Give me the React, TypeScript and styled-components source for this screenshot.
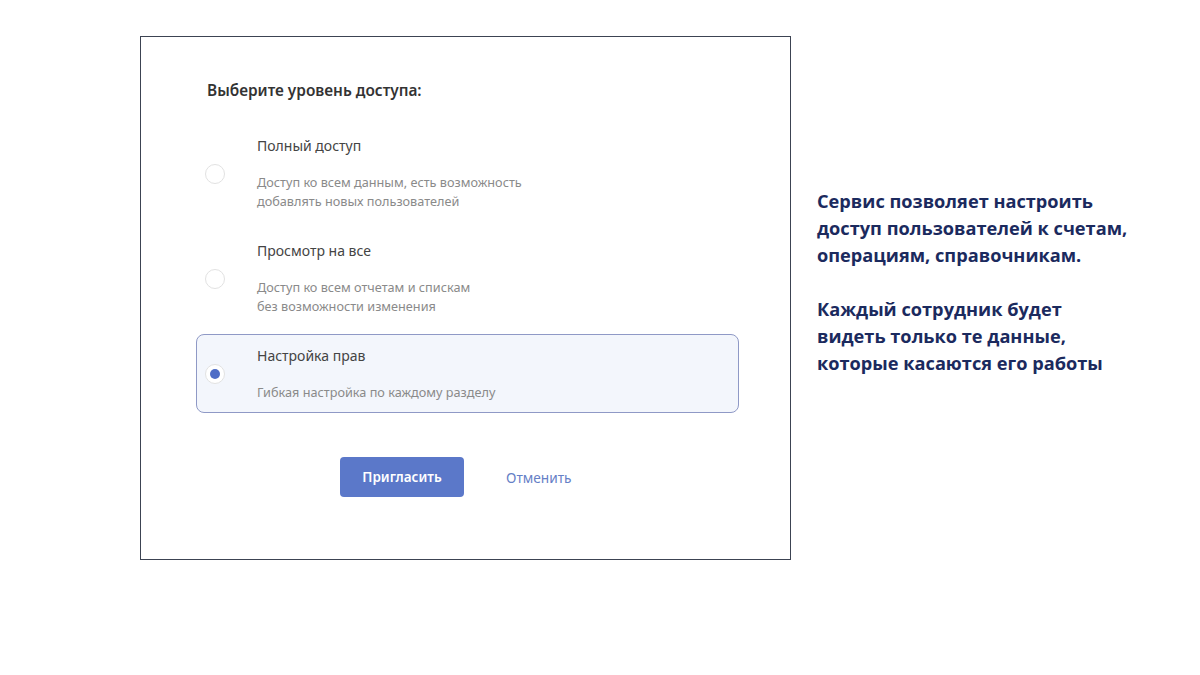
import React, { useState } from "react";
import styled, { createGlobalStyle } from "styled-components";

const GlobalStyle = createGlobalStyle`
  html, body {
    margin: 0;
    padding: 0;
    background: #ffffff;
  }
  body {
    font-family: "Noto Sans", "Open Sans", sans-serif;
  }
`;

const options = [
  {
    id: "full",
    title: "Полный доступ",
    description: ["Доступ ко всем данным, есть возможность", "добавлять новых пользователей"],
  },
  {
    id: "view",
    title: "Просмотр на все",
    description: ["Доступ ко всем отчетам и спискам", "без возможности изменения"],
  },
  {
    id: "custom",
    title: "Настройка прав",
    description: ["Гибкая настройка по каждому разделу"],
  },
];

const Page = styled.div`
  display: flex;
  align-items: flex-start;
  padding: 36px 0 0 140px;
  width: 1200px;
  height: 675px;
  box-sizing: border-box;
`;

const Frame = styled.section`
  width: 651px;
  height: 524px;
  box-sizing: border-box;
  border: 1px solid #3c4352;
  padding: 44px 51px 0 55px;
  background: #fff;
`;

const Title = styled.h2`
  margin: 0 0 23px 11px;
  font-size: 15.4px;
  line-height: 20px;
  font-weight: 600;
  color: #333;
`;

const OptionList = styled.div`
  display: flex;
  flex-direction: column;
  gap: 7px;
`;

const Option = styled.label<{ $active: boolean }>`
  display: flex;
  align-items: center;
  gap: 32px;
  padding: 11px 8px 10px 8px;
  border: 1px solid ${(p) => (p.$active ? "#8f99c6" : "transparent")};
  border-radius: 8px;
  background: ${(p) => (p.$active ? "#f3f6fc" : "transparent")};
  cursor: pointer;
`;

const Radio = styled.span<{ $checked: boolean }>`
  flex: none;
  width: 20px;
  height: 20px;
  box-sizing: border-box;
  border-radius: 50%;
  border: 1px solid #e2e2e2;
  background: #fff;
  display: flex;
  align-items: center;
  justify-content: center;

  &::after {
    content: "";
    width: 10px;
    height: 10px;
    border-radius: 50%;
    background: ${(p) => (p.$checked ? "#4e6cc6" : "transparent")};
  }
`;

const OptionText = styled.div`
  display: flex;
  flex-direction: column;
`;

const OptionTitle = styled.span`
  font-size: 14px;
  line-height: 20px;
  color: #444;
  margin-bottom: 17px;
`;

const OptionDescription = styled.span`
  font-size: 12.7px;
  line-height: 19px;
  color: #8a8a8a;
`;

const Actions = styled.div`
  display: flex;
  align-items: center;
  gap: 42px;
  margin: 44px 0 0 144px;
`;

const PrimaryButton = styled.button`
  width: 124px;
  height: 40px;
  border: none;
  border-radius: 4px;
  background: #5b78c9;
  color: #fff;
  font-family: inherit;
  font-size: 13.5px;
  font-weight: 600;
  cursor: pointer;
`;

const LinkButton = styled.button`
  border: none;
  background: none;
  padding: 0;
  color: #6680c6;
  font-family: inherit;
  font-size: 13.7px;
  cursor: pointer;
`;

const Aside = styled.aside`
  margin: 152px 0 0 26px;
  color: #1b2a5e;
  font-family: "Open Sans", "Noto Sans", sans-serif;
  font-size: 18.2px;
  font-weight: 700;
  line-height: 27px;

  p {
    margin: 0 0 27px;
  }
`;

export default function App() {
  const [selected, setSelected] = useState("custom");

  return (
    <>
      <GlobalStyle />
      <Page>
        <Frame>
          <Title>Выберите уровень доступа:</Title>
          <OptionList>
            {options.map((o) => (
              <Option key={o.id} $active={selected === o.id} onClick={() => setSelected(o.id)}>
                <Radio $checked={selected === o.id} />
                <OptionText>
                  <OptionTitle>{o.title}</OptionTitle>
                  {o.description.map((line) => (
                    <OptionDescription key={line}>{line}</OptionDescription>
                  ))}
                </OptionText>
              </Option>
            ))}
          </OptionList>
          <Actions>
            <PrimaryButton>Пригласить</PrimaryButton>
            <LinkButton>Отменить</LinkButton>
          </Actions>
        </Frame>
        <Aside>
          <p>
            Сервис позволяет настроить
            <br />
            доступ пользователей к счетам,
            <br />
            операциям, справочникам.
          </p>
          <p>
            Каждый сотрудник будет
            <br />
            видеть только те данные,
            <br />
            которые касаются его работы
          </p>
        </Aside>
      </Page>
    </>
  );
}
